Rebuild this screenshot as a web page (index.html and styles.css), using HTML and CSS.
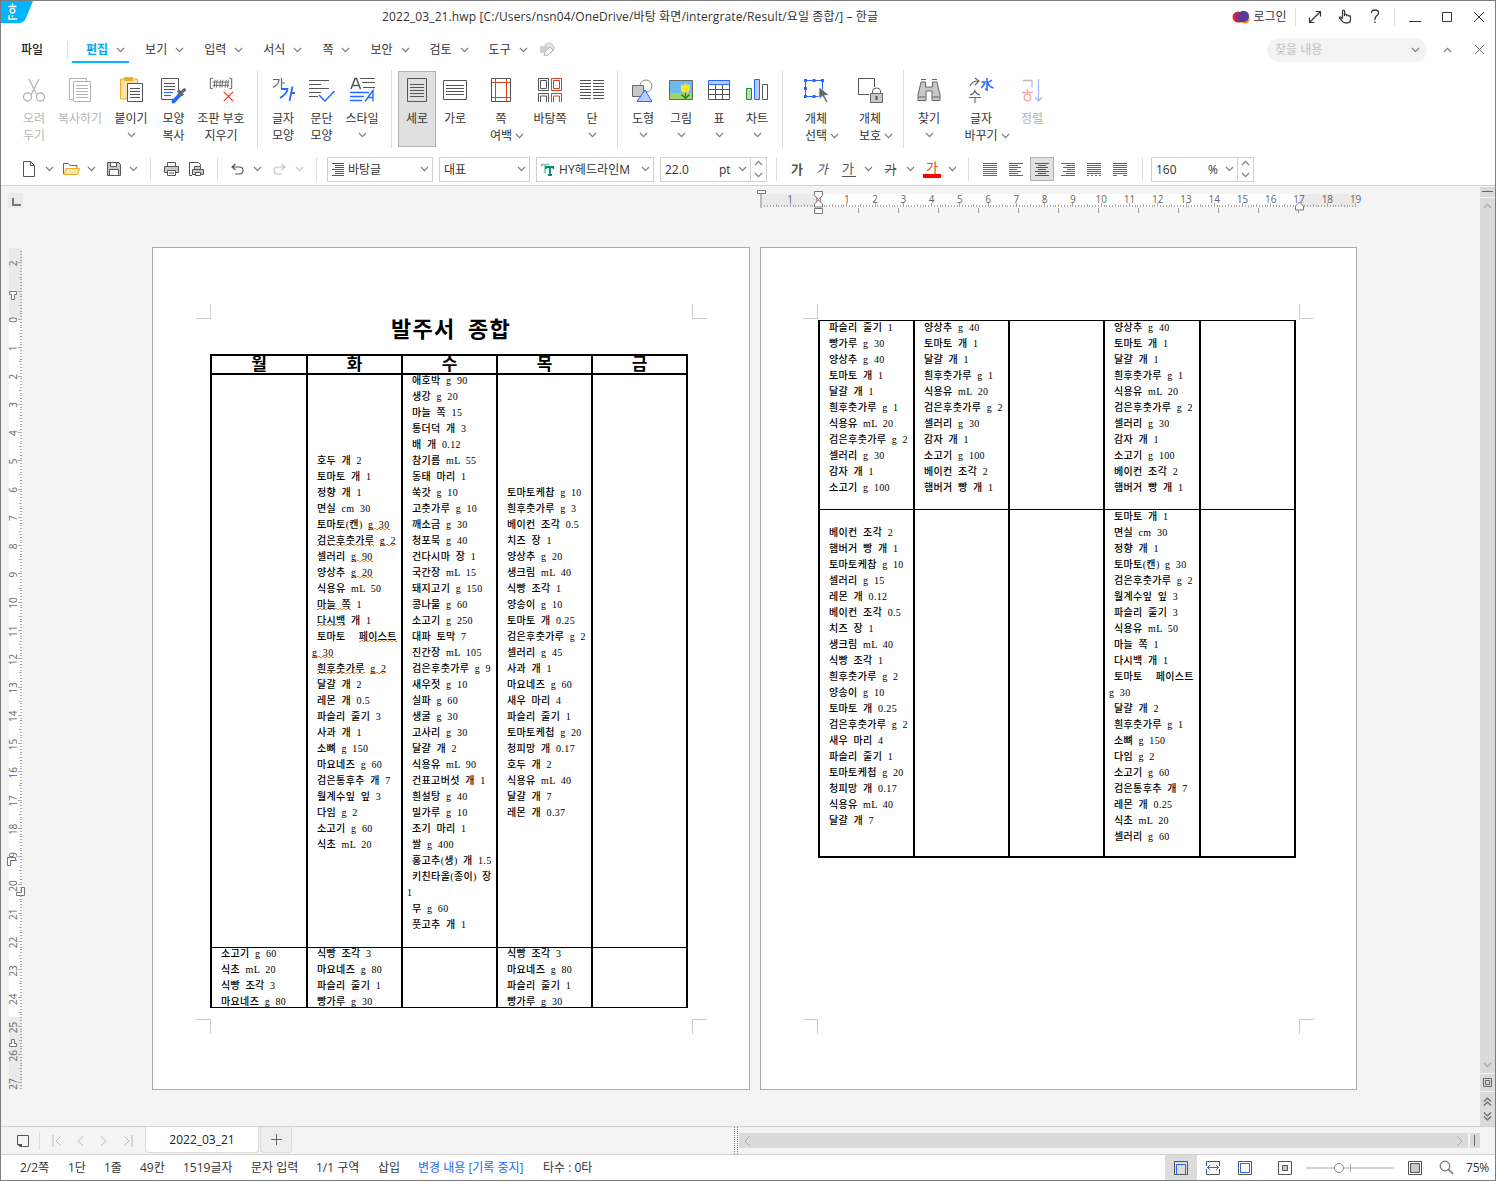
FILE: index.html
```html
<!DOCTYPE html>
<html lang="ko">
<head>
<meta charset="utf-8">
<title>2022_03_21.hwp - 한글</title>
<link rel="stylesheet" href="styles.css">
</head>
<body>
<svg width="0" height="0" class="defs" aria-hidden="true">
  <symbol id="chev" viewBox="0 0 9 6"><path d="M1 1l3.5 3.7L8 1" fill="none" stroke="#808080" stroke-width="1.2"/></symbol>
</svg>
<div class="app">
  <header class="titlebar">
    <svg class="logo" width="33" height="23" viewBox="0 0 33 23"><path d="M0 0h32l-7 17q-2 5-7 5H0z" fill="#00b4ff"/><g stroke="#fff" stroke-width="1.400" fill="none"><path d="M11.500 2.500v2M7.500 5.500h8"/><circle cx="11.500" cy="9.700" r="2.300"/><path d="M8 14v4h8M11.500 14v2"/></g></svg>
    <h1 class="caption">2022_03_21.hwp [C:/Users/nsn04/OneDrive/바탕 화면/intergrate/Result/요일 종합/] – 한글</h1>
    <div class="winbtns">
      <svg width="18" height="16" viewBox="0 0 18 16"><circle cx="13" cy="10" r="4.500" fill="#f89020"/><circle cx="6" cy="8" r="5.500" fill="#e0243c"/><circle cx="8.500" cy="8.500" r="5" fill="#9c2860"/><circle cx="11.500" cy="7.300" r="5.600" fill="#5a3c98"/></svg>
      <span>로그인</span>
      <i class="vline"></i>
      <svg width="14" height="14" viewBox="0 0 14 14"><path d="M2 12L12 2M7.500 1.500h5v5M1.500 7.500v5h5" fill="none" stroke="#333" stroke-width="1.200"/></svg>
      <svg width="14" height="15" viewBox="0 0 14 15"><path d="M4.500 9V2.500q0-1.500 1-1.500t1 1.500V7 5.500q2-.8 2 .8 2-.8 2 .7 2-.6 2 .8v3q0 3-3 3H7q-2 0-3-2L1.500 9q0-1.600 1.500-.8L4.500 10" fill="none" stroke="#333" stroke-width="1.200"/></svg>
      <svg width="10" height="15" viewBox="0 0 10 15"><path d="M1.500 4q0-3 3.500-3t3.500 3q0 1.700-1.700 2.800T5 10v1M5 12.500V14" fill="none" stroke="#333" stroke-width="1.300"/></svg>
      <i class="vline"></i>
      <svg width="12" height="12" viewBox="0 0 12 12"><path d="M0 10.500h12" stroke="#333"/></svg>
      <svg width="12" height="12" viewBox="0 0 12 12"><path d="M1.500 1.500h9v9h-9z" fill="none" stroke="#333"/></svg>
      <svg width="12" height="12" viewBox="0 0 12 12"><path d="M1 1l10 10M11 1L1 11" stroke="#333"/></svg>
    </div>
  </header>

  <nav class="menubar">
    <span class="file">파일</span><i class="vline"></i>
    <span class="menu active">편집<svg class="chev"><use href="#chev"/></svg></span>
    <span class="menu">보기<svg class="chev"><use href="#chev"/></svg></span>
    <span class="menu">입력<svg class="chev"><use href="#chev"/></svg></span>
    <span class="menu">서식<svg class="chev"><use href="#chev"/></svg></span>
    <span class="menu">쪽<svg class="chev"><use href="#chev"/></svg></span>
    <span class="menu">보안<svg class="chev"><use href="#chev"/></svg></span>
    <span class="menu">검토<svg class="chev"><use href="#chev"/></svg></span>
    <span class="menu">도구<svg class="chev"><use href="#chev"/></svg></span>
    <svg class="draw" width="17" height="15" viewBox="0 0 17 15"><circle cx="10" cy="6" r="5" fill="#e4e4e4" stroke="#c4c4c4"/><path d="M1 4h8v7H1z" fill="#d0d0d0"/><path d="M5 13.500l1-3.500 5-5 3 3-5 5z" fill="#fff" stroke="#b4b4b4"/></svg>
    <div class="search"><span>찾을 내용</span><svg class="chev"><use href="#chev"/></svg></div>
    <svg class="chev up"><use href="#chev"/></svg>
    <svg class="close" width="11" height="11" viewBox="0 0 11 11"><path d="M1 1l9 9M10 1l-9 9" stroke="#777"/></svg>
  </nav>

  <section class="ribbon">
    <div class="cmd off"><svg width="24" height="26" viewBox="0 0 24 26"><g fill="none" stroke="#b4b4b4" stroke-width="1.300"><path d="M7 2l8 16M17 2L9 18"/><circle cx="5.500" cy="20" r="4"/><circle cx="18.500" cy="20" r="4"/></g></svg><b>오려</b><b>두기</b></div>
    <div class="cmd off"><svg width="24" height="26" viewBox="0 0 24 26"><path d="M5 22.500H1.500v-21h17V4M5.500 4.500h17v20h-17zM8 8.500h12M8 11.500h12M8 14.500h12M8 17.500h12M8 20.500h12" fill="none" stroke="#b4b4b4"/></svg><b>복사하기</b></div>
    <div class="cmd"><svg width="24" height="26" viewBox="0 0 24 26"><path d="M1.500 2h17v20h-17z" fill="#fae3b0" stroke="#eeb020"/><path d="M5 0h9v4H5z" fill="#eeb020"/><path d="M8.500 6.500h15v18h-15z" fill="#fff" stroke="#555"/><path d="M11 11.500h10M11 14.500h10M11 17.500h10M11 20.500h10" stroke="#555"/></svg><b>붙이기</b><svg class="chev"><use href="#chev"/></svg></div>
    <div class="cmd"><svg width="27" height="26" viewBox="0 0 27 26"><path d="M13 22.500H1.500v-21h17V14M4 6.500h11M4 9.500h11M4 12.500h11" fill="none" stroke="#555"/><path d="M4 15.500h9M4 18.500h7" stroke="#2468ff"/><path d="M13.500 24.500l7-7.500" stroke="#2468ff" stroke-width="4" stroke-linecap="round"/><path d="M18 13.500l5 5M20.500 16l5-4" stroke="#666" stroke-width="3"/></svg><b>모양</b><b>복사</b></div>
    <div class="cmd"><svg width="28" height="28" viewBox="0 0 28 28"><path d="M5 1.500H2.500v11H5M23 1.500h2.500v11H23" fill="none" stroke="#555"/><path d="M5 5.500h17.500M5 9h17.500M7.500 3l-1 8.500M10 3L9 11.500M13.500 3l-1 8.500M16 3l-1 8.500M19.500 3l-1 8.500M22 3l-1 8.500" stroke="#666"/><path d="M17 16l10 10M27 16L17 26" stroke="#e04020" stroke-width="1.400"/></svg><b>조판 부호</b><b>지우기</b></div>
    <i class="vline"></i>
    <div class="cmd"><svg width="24" height="26" viewBox="0 0 24 26"><g fill="none"><path d="M2 2.500h6q0 5-6 8M10.500 1v11M10.500 6H14" stroke="#666" stroke-width="1.200"/><path d="M10 12h6.500q-.5 5-7.500 9M21.500 9.500L18.500 24M20 16h4" stroke="#2468ff" stroke-width="1.800"/></g></svg><b>글자</b><b>모양</b></div>
    <div class="cmd"><svg width="26" height="26" viewBox="0 0 26 26"><path d="M0 3.500h20M0 7.500h12M0 11.500h20M0 15.500h12M0 19.500h9" stroke="#555"/><path d="M10 18l6 6 9.500-10" fill="none" stroke="#2468ff" stroke-width="1.500"/></svg><b>문단</b><b>모양</b></div>
    <div class="cmd"><svg width="25" height="26" viewBox="0 0 25 26"><path d="M1 12L5 1.500h1.500l4 10.500M2.500 8.500H9" fill="none" stroke="#555" stroke-width="1.500"/><path d="M10 1.500h15M12 5.500h13M13 10.500h12" stroke="#555"/><path d="M0 15.500h19M0 19.500h14M0 23.500h12M15 24.500l8-11v11M18 20.500h5" fill="none" stroke="#2468ff" stroke-width="1.400"/></svg><b>스타일</b><svg class="chev"><use href="#chev"/></svg></div>
    <i class="vline"></i>
    <div class="cmd sel"><svg width="20" height="26" viewBox="0 0 20 26"><path d="M.5 1.500h19v23H.5zM3 7.500h14M3 10.500h14M3 13.500h14M3 16.500h14M3 19.500h14" fill="none" stroke="#555"/></svg><b>세로</b></div>
    <div class="cmd"><svg width="24" height="26" viewBox="0 0 24 26"><path d="M.5 3.500h23v19H.5zM3 8.500h18M3 11.500h18M3 14.500h18M3 17.500h18" fill="none" stroke="#555"/></svg><b>가로</b></div>
    <div class="cmd"><svg width="20" height="26" viewBox="0 0 20 26"><path d="M.5 1.500h19v23H.5z" fill="none" stroke="#555"/><path d="M4.500 2v22M15.500 2v22M1 5.500h18M1 20.500h18" stroke="#e04020"/></svg><b>쪽</b><b class="drop">여백<svg class="chev"><use href="#chev"/></svg></b></div>
    <div class="cmd"><svg width="24" height="26" viewBox="0 0 24 26"><g fill="none" stroke="#555"><path d="M.5 1.500h10v12H.5zM2.500 3.500h6v8h-6zM.5 25v-8.500h10V25M2.500 25v-6h6v6"/><path d="M13.500 1.500h10v12h-10zM15.500 3.500h6v8h-6zM13.500 25v-8.500h10V25M15.500 25v-6h6v6" stroke="#e04020"/></g></svg><b>바탕쪽</b></div>
    <div class="cmd"><svg width="24" height="26" viewBox="0 0 24 26"><path d="M0 3.500h11M0 6.500h11M0 9.500h11M0 12.500h11M0 15.500h11M0 18.500h11M0 21.500h11M13 3.500h11M13 6.500h11M13 9.500h11M13 12.500h11M13 15.500h11M13 18.500h11M13 21.500h11" stroke="#555"/></svg><b>단</b><svg class="chev"><use href="#chev"/></svg></div>
    <i class="vline"></i>
    <div class="cmd"><svg width="22" height="26" viewBox="0 0 22 26"><circle cx="14" cy="9" r="6" fill="#fff" stroke="#888"/><path d="M.5 8.500h11v11H.5z" fill="#c8c8c8" stroke="#666"/><path d="M5 24.500L13 13l7 11.500z" fill="#b8ccff" stroke="#2468ff"/></svg><b>도형</b><svg class="chev"><use href="#chev"/></svg></div>
    <div class="cmd"><svg width="24" height="26" viewBox="0 0 24 26"><path d="M.5 3.500h23v19H.5z" fill="#6cbcf0"/><path d="M1 16h22v6H1z" fill="#a0d468"/><path d="M.5 3.500h23v19H.5z" fill="none" stroke="#666"/><path d="M12 7l2 1.500L16.500 6 19 8.500 21 7v6q-1 3-4.500 3T12 13z" fill="#ffe030"/><path d="M16.500 15.500V22M12.500 17.500l4 4 4-4" fill="none" stroke="#1c7c1c" stroke-width="1.200"/></svg><b>그림</b><svg class="chev"><use href="#chev"/></svg></div>
    <div class="cmd"><svg width="22" height="26" viewBox="0 0 22 26"><path d="M.5 7.500h21v15H.5zM1 12.500h20M1 17.500h20M7.500 8v14M14.500 8v14" fill="none" stroke="#555"/><path d="M.5 3.500h21v4H.5z" fill="#b8ccff" stroke="#2468ff"/></svg><b>표</b><svg class="chev"><use href="#chev"/></svg></div>
    <div class="cmd"><svg width="23" height="26" viewBox="0 0 23 26"><path d="M.5 11.500h5v11h-5z" fill="#b4e0b4" stroke="#209020"/><path d="M8.500 2.500h5v20h-5z" fill="#b8ccff" stroke="#2468ff"/><path d="M16.500 7.500h5v15h-5z" fill="#fff" stroke="#555"/></svg><b>차트</b><svg class="chev"><use href="#chev"/></svg></div>
    <i class="vline"></i>
    <div class="cmd"><svg width="26" height="26" viewBox="0 0 26 26"><path d="M2.500 3.500h17v16h-17z" fill="none" stroke="#2468ff"/><path d="M1 2h3v3H1zM9.500 2h3v3h-3zM18 2h3v3h-3zM1 10h3v3H1zM1 18h3v3H1zM9.500 18h3v3h-3z" fill="#2468ff"/><path d="M16 10v0l10 8-4.500.5L25 25l-2 .5-3.500-6.500-3.500 3z" fill="#666" stroke="#fff" stroke-width=".6"/></svg><b>개체</b><b class="drop">선택<svg class="chev"><use href="#chev"/></svg></b></div>
    <div class="cmd"><svg width="26" height="26" viewBox="0 0 26 26"><path d="M12 17.500H1.500v-16h16V10" fill="none" stroke="#555"/><path d="M15.500 17v-3q0-3 4-3t4 3v3" fill="none" stroke="#666"/><path d="M13.500 16.500h12v9h-12z" fill="#c8c8c8" stroke="#666"/><path d="M19.500 19v4" stroke="#555" stroke-width="2"/></svg><b>개체</b><b class="drop">보호<svg class="chev"><use href="#chev"/></svg></b></div>
    <i class="vline"></i>
    <div class="cmd"><svg width="24" height="26" viewBox="0 0 24 26"><path d="M4 5L1 18v5.500h8V14h6v9.500h8V18L20 5h-4.500v5h-7V5zM4 2.500h5M15 2.500h5M1.500 20h7M15.500 20h7" fill="#c8c8c8" stroke="#666"/></svg><b>찾기</b><svg class="chev"><use href="#chev"/></svg></div>
    <div class="cmd"><svg width="26" height="26" viewBox="0 0 26 26"><path d="M2 9q2-5 8-5M7 1l4 3-4 4M7 13q-1 4-5 5M7 14q1 3 5 4M1 20.500h12M7 20.500V26" fill="none" stroke="#666" stroke-width="1.100"/><path d="M19 1v12l-2-1M13.500 5H17q-1 4-4 6M24 3l-4.500 3q2 4 6 5" fill="none" stroke="#2468ff" stroke-width="1.500"/></svg><b>글자</b><b class="drop">바꾸기<svg class="chev"><use href="#chev"/></svg></b></div>
    <div class="cmd off"><svg width="22" height="26" viewBox="0 0 22 26"><g fill="none"><path d="M2 3.500h9v7" stroke="#bbb" stroke-width="1.300"/><path d="M6.500 12v3M1 15.500h11" stroke="#f4a4a0" stroke-width="1.300"/><circle cx="6.500" cy="20.500" r="3.300" stroke="#f4a4a0" stroke-width="1.300"/><path d="M17.500 2v22M14 20l3.500 4 3.500-4" stroke="#9cbcff" stroke-width="1.200"/></g></svg><b>정렬</b></div>
  </section>

  <section class="toolbar">
    <svg width="14" height="16" viewBox="0 0 14 16"><path d="M1.500.5h7l4 4v11h-11zM8.500.5v4h4" fill="none" stroke="#555"/></svg>
    <svg class="chev"><use href="#chev"/></svg>
    <svg width="17" height="14" viewBox="0 0 17 14"><path d="M.5 12V1.500h5l1.500 2h7V6" fill="none" stroke="#666"/><path d="M1 12.500L3 6.500h13.500l-1.800 6z" fill="#fae3b0" stroke="#eeb020"/></svg>
    <svg class="chev"><use href="#chev"/></svg>
    <svg width="14" height="14" viewBox="0 0 14 14"><path d="M.5.500h11l2 2v11H.5z" fill="#c8c8c8" stroke="#555"/><path d="M3.500.5h6v4h-6zM2.500 7.500h9v6h-9z" fill="#fff" stroke="#555"/></svg>
    <svg class="chev"><use href="#chev"/></svg>
    <i class="vline"></i>
    <svg width="15" height="14" viewBox="0 0 15 14"><path d="M3.500.5h8v4h-8z" fill="#fff" stroke="#555"/><path d="M.5 4.500h14v6H.5z" fill="#c8c8c8" stroke="#555"/><path d="M3.500 8.500h8v5h-8zM5 11h5" fill="#fff" stroke="#555"/></svg>
    <svg width="16" height="16" viewBox="0 0 16 16"><path d="M4 14.500H1.500V1.500h9l2 2V5" fill="none" stroke="#555"/><path d="M6.500 5.500h6v3h-6zM4.500 8.500h11v5h-11z" fill="#c8c8c8" stroke="#555"/><path d="M7.500 11.500h5v3h-5z" fill="#fff" stroke="#555"/></svg>
    <i class="vline"></i>
    <svg width="13" height="12" viewBox="0 0 13 12"><path d="M4.500 1L1 4l3.500 3M1 4h7.500q3.500 0 3.500 3.500T8.500 11H4" fill="none" stroke="#555" stroke-width="1.200"/></svg>
    <svg class="chev"><use href="#chev"/></svg>
    <svg width="13" height="12" viewBox="0 0 13 12"><path d="M8.500 1L12 4 8.500 7M12 4H4.500Q1 4 1 7.500T4.500 11H9" fill="none" stroke="#c4c4c4" stroke-width="1.200"/></svg>
    <svg class="chev faint"><use href="#chev"/></svg>
    <i class="vline end1"></i>
    <div class="field"><svg width="13" height="14" viewBox="0 0 13 14"><path d="M0 1.500h12M3 3.500h9M3 5.500h9M0 7.500h12M3 9.500h9M3 11.500h9M0 13.500h12" stroke="#555"/></svg><span>바탕글</span><svg class="chev"><use href="#chev"/></svg></div>
    <div class="field"><span>대표</span><svg class="chev"><use href="#chev"/></svg></div>
    <div class="field face"><svg width="13" height="13" viewBox="0 0 13 13"><path d="M.5 4V1.500h8M4 1.500v8M2.500 9.500H5" fill="none" stroke="#7cc8b0" stroke-width="1.500"/><path d="M5 6V4h7.500v2M9 4v8M7 12h4" fill="none" stroke="#008c74" stroke-width="1.800"/></svg><span>HY헤드라인M</span><svg class="chev"><use href="#chev"/></svg></div>
    <div class="field"><span class="num">22.0</span><span>pt</span><svg class="chev"><use href="#chev"/></svg><div class="spin"><svg class="chev up"><use href="#chev"/></svg><svg class="chev"><use href="#chev"/></svg></div></div>
    <i class="vline"></i>
    <b class="fmt">가</b>
    <em class="fmt">가</em>
    <u class="fmt">가</u>
    <svg class="chev"><use href="#chev"/></svg>
    <s class="fmt">가</s>
    <svg class="chev"><use href="#chev"/></svg>
    <span class="fmt color">가</span>
    <svg class="chev"><use href="#chev"/></svg>
    <i class="vline end2"></i>
    <span class="al"><svg width="14" height="14" viewBox="0 0 14 14"><path d="M0 1.500h14M0 3.500h14M0 5.500h14M0 7.500h14M0 9.500h14M0 11.500h14M0 13.500h14" stroke="#666"/></svg></span>
    <span class="al"><svg width="14" height="14" viewBox="0 0 14 14"><path d="M0 1.500h14M0 3.500h9M0 5.500h12M0 7.500h8M0 9.500h12M0 11.500h9M0 13.500h14" stroke="#666"/></svg></span>
    <span class="al on"><svg width="14" height="14" viewBox="0 0 14 14"><path d="M0 1.500h14M3 3.500h8M1 5.500h12M3 7.500h8M0 9.500h14M3 11.500h8M0 13.500h14" stroke="#555"/></svg></span>
    <span class="al"><svg width="14" height="14" viewBox="0 0 14 14"><path d="M0 1.500h14M5 3.500h9M2 5.500h12M6 7.500h8M2 9.500h12M5 11.500h9M0 13.500h14" stroke="#666"/></svg></span>
    <span class="al"><svg width="14" height="14" viewBox="0 0 14 14"><path d="M0 1.500h14M0 3.500h14M0 5.500h14M0 7.500h14M0 9.500h14M0 11.500h14M0 13.500h2M4 13.500h2M8 13.500h2M12 13.500h2" stroke="#666"/></svg></span>
    <span class="al"><svg width="14" height="14" viewBox="0 0 14 14"><path d="M0 1.500h14M0 3.500h14M0 5.500h14M0 7.500h14M0 9.500h14M0 11.500h14M0 13.500h4M10 13.500h4" stroke="#666"/></svg></span>
    <i class="vline"></i>
    <div class="field"><span class="num">160</span><span>%</span><svg class="chev"><use href="#chev"/></svg><div class="spin"><svg class="chev up"><use href="#chev"/></svg><svg class="chev"><use href="#chev"/></svg></div></div>
  </section>

  <main class="work">
    <div class="canvas">
      <div class="tabtype"></div>
      <svg id="hruler" class="hruler" width="620" height="28"></svg>
      <svg id="vruler" class="vruler" width="20" height="842"></svg>
      <article class="page first">
        <i class="crop tl"></i><i class="crop tr"></i><i class="crop bl"></i><i class="crop br"></i>
        <h2>발주서 종합</h2>
        <div class="sheet">
          <div class="c head">월</div><div class="c head">화</div><div class="c head">수</div><div class="c head">목</div><div class="c head">금</div>
<div class="c"></div>
<div class="c"><p>호두 개 2
토마토 개 1
정향 개 1
면실 cm 30
토마토(캔) <q>g 30</q>
<q>검은후춧가루</q> <q>g 2</q>
셀러리 <q>g 90</q>
양상추 <q>g 20</q>
식용유 mL 50
<q>마늘 쪽</q> 1
<q>다시백</q> 개 1
<span class="spread">토마토 </span><q>페이스트</q>
<span class="wrap"><q>g 30</q></span>
<q>흰후춧가루</q> <q>g 2</q>
달걀 개 2
레몬 개 0.5
파슬리 줄기 3
사과 개 1
소뼈 g 150
마요네즈 g 60
검은통후추 개 7
월계수잎 잎 3
다임 g 2
소고기 g 60
식초 mL 20</p></div>
<div class="c"><p>애호박 g 90
생강 g 20
마늘 쪽 15
통더덕 개 3
배 개 0.12
참기름 mL 55
동태 마리 1
쑥갓 g 10
고춧가루 g 10
깨소금 g 30
청포묵 g 40
건다시마 장 1
국간장 mL 15
돼지고기 g 150
콩나물 g 60
소고기 g 250
대파 토막 7
진간장 mL 105
검은후춧가루 g 9
새우젓 g 10
실파 g 60
생굴 g 30
고사리 g 30
달걀 개 2
식용유 mL 90
건표고버섯 개 1
흰설탕 g 40
밀가루 g 10
조기 마리 1
쌀 g 400
홍고추(생) 개 1.5
키친타올(종이) 장
<span class="wrap">1</span>
무 g 60
풋고추 개 1</p></div>
<div class="c"><p>토마토케찹 g 10
흰후춧가루 g 3
베이컨 조각 0.5
치즈 장 1
양상추 g 20
생크림 mL 40
식빵 조각 1
양송이 g 10
토마토 개 0.25
검은후춧가루 g 2
셀러리 g 45
사과 개 1
마요네즈 g 60
새우 마리 4
파슬리 줄기 1
토마토케첩 g 20
청피망 개 0.17
호두 개 2
식용유 mL 40
달걀 개 7
레몬 개 0.37</p></div>
<div class="c"></div>
<div class="c top"><p>소고기 g 60
식초 mL 20
식빵 조각 3
마요네즈 g 80</p></div>
<div class="c top"><p>식빵 조각 3
마요네즈 g 80
파슬리 줄기 1
빵가루 g 30</p></div>
<div class="c top"></div>
<div class="c top"><p>식빵 조각 3
마요네즈 g 80
파슬리 줄기 1
빵가루 g 30</p></div>
<div class="c top"></div>
        </div>
      </article>
      <article class="page second">
        <i class="crop tl"></i><i class="crop tr"></i><i class="crop bl"></i><i class="crop br"></i>
        <div class="sheet">
<div class="c top"><p>파슬리 줄기 1
빵가루 g 30
양상추 g 40
토마토 개 1
달걀 개 1
흰후춧가루 g 1
식용유 mL 20
검은후춧가루 g 2
셀러리 g 30
감자 개 1
소고기 g 100</p></div>
<div class="c top"><p>양상추 g 40
토마토 개 1
달걀 개 1
흰후춧가루 g 1
식용유 mL 20
검은후춧가루 g 2
셀러리 g 30
감자 개 1
소고기 g 100
베이컨 조각 2
햄버거 빵 개 1</p></div>
<div class="c top"></div>
<div class="c top"><p>양상추 g 40
토마토 개 1
달걀 개 1
흰후춧가루 g 1
식용유 mL 20
검은후춧가루 g 2
셀러리 g 30
감자 개 1
소고기 g 100
베이컨 조각 2
햄버거 빵 개 1</p></div>
<div class="c top"></div>
<div class="c"><p>베이컨 조각 2
햄버거 빵 개 1
토마토케찹 g 10
셀러리 g 15
레몬 개 0.12
베이컨 조각 0.5
치즈 장 1
생크림 mL 40
식빵 조각 1
흰후춧가루 g 2
양송이 g 10
토마토 개 0.25
검은후춧가루 g 2
새우 마리 4
파슬리 줄기 1
토마토케첩 g 20
청피망 개 0.17
식용유 mL 40
달걀 개 7</p></div>
<div class="c"></div>
<div class="c"></div>
<div class="c"><p>토마토 개 1
면실 cm 30
정향 개 1
토마토(캔) g 30
검은후춧가루 g 2
월계수잎 잎 3
파슬리 줄기 3
식용유 mL 50
마늘 쪽 1
다시백 개 1
<span class="spread">토마토 </span>페이스트
<span class="wrap">g 30</span>
달걀 개 2
흰후춧가루 g 1
소뼈 g 150
다임 g 2
소고기 g 60
검은통후추 개 7
레몬 개 0.25
식초 mL 20
셀러리 g 60</p></div>
<div class="c"></div>
        </div>
      </article>
    </div>
    <aside class="vscroll">
      <div class="split"></div>
      <div class="track"><svg class="chev up"><use href="#chev"/></svg><svg class="chev"><use href="#chev"/></svg></div>
      <div class="obj"><svg width="9" height="9" viewBox="0 0 9 9"><path d="M.5.500h8v8h-8zM2.500 2.500h4v4h-4z" fill="none" stroke="#666"/></svg></div>
      <div class="jump"><svg width="9" height="9" viewBox="0 0 9 9"><path d="M1 4.500L4.500 1 8 4.500M1 8.500L4.500 5 8 8.500" fill="none" stroke="#666" stroke-width="1.200"/></svg><svg width="9" height="9" viewBox="0 0 9 9"><path d="M1 .5L4.500 4 8 .5M1 4.500L4.500 8 8 4.500" fill="none" stroke="#666" stroke-width="1.200"/></svg></div>
    </aside>
  </main>

  <section class="tabs">
    <svg width="12" height="14" viewBox="0 0 12 14"><path d="M.5 1.500h11v11h-6l-5-2z" fill="none" stroke="#555"/><path d="M0 10h5v3H3z" fill="#555"/></svg>
    <i class="vline"></i>
    <svg width="9" height="12" viewBox="0 0 9 12"><path d="M1 0v12M8.500 1.500L4 6l4.500 4.500" fill="none" stroke="#bbb"/></svg>
    <svg width="9" height="12" viewBox="0 0 9 12"><path d="M7 1.500L2 6l5 4.500" fill="none" stroke="#bbb"/></svg>
    <svg width="9" height="12" viewBox="0 0 9 12"><path d="M2 1.500L7 6l-5 4.500" fill="none" stroke="#bbb"/></svg>
    <svg width="9" height="12" viewBox="0 0 9 12"><path d="M8 0v12M.5 1.500L5 6 .5 10.500" fill="none" stroke="#bbb"/></svg>
    <div class="tab">2022_03_21</div>
    <div class="add"><svg width="11" height="11" viewBox="0 0 11 11"><path d="M5.500 0v11M0 5.500h11" stroke="#666"/></svg></div>
    <div class="grip"></div>
    <div class="hscroll"><svg width="6" height="10" viewBox="0 0 6 10"><path d="M5.500.5L1 5l4.500 4.500" fill="none" stroke="#aaa"/></svg><svg width="6" height="10" viewBox="0 0 6 10"><path d="M.5.500L5 5 .5 9.500" fill="none" stroke="#aaa"/></svg></div>
    <div class="hsplit"></div>
  </section>

  <footer class="status">
    <span>2/2쪽</span><span>1단</span><span>1줄</span><span>49칸</span><span>1519글자</span><span>문자 입력</span><span>1/1 구역</span><span>삽입</span><span class="blue">변경 내용 [기록 중지]</span><span>타수 : 0타</span>
    <div class="views">
      <span class="v on"><svg width="14" height="14" viewBox="0 0 14 14"><path d="M.5.500h13v13H.5z" fill="none" stroke="#555"/><path d="M2.500 14V3.500h9V14" fill="none" stroke="#2468ff"/></svg></span>
      <span class="v"><svg width="14" height="14" viewBox="0 0 14 14"><path d="M.5.500h13v13H.5z" fill="none" stroke="#555"/><path d="M0 5h14v3H0z" fill="#fff"/><path d="M1 6.500h12M4 4L1.500 6.500 4 9M10 4l2.500 2.500L10 9" fill="none" stroke="#2468ff"/></svg></span>
      <span class="v"><svg width="14" height="14" viewBox="0 0 14 14"><path d="M.5.500h13v13H.5z" fill="none" stroke="#555"/><path d="M2.500 2.500h9v9h-9z" fill="none" stroke="#2468ff"/></svg></span>
      <span class="v z"><svg width="14" height="14" viewBox="0 0 14 14"><path d="M.5.500h13v13H.5z" fill="none" stroke="#555"/><path d="M4.500 4.500h5v5h-5z" fill="#c8c8c8" stroke="#555"/></svg></span>
      <svg class="slider" width="88" height="14" viewBox="0 0 88 14"><path d="M0 7h88" stroke="#c4c4c4" stroke-width="1.500"/><path d="M44.500 3v8" stroke="#aaa"/><circle cx="33" cy="7" r="4.500" fill="#fff" stroke="#888"/></svg>
      <svg class="fit" width="14" height="14" viewBox="0 0 14 14"><path d="M.5.500h13v13H.5z" fill="none" stroke="#555"/><path d="M2.500 2.500h9v9h-9z" fill="#c8c8c8" stroke="#555"/></svg>
      <svg class="mag" width="15" height="15" viewBox="0 0 15 15"><circle cx="6" cy="6" r="4.800" fill="none" stroke="#777" stroke-width="1.200"/><path d="M9.500 9.500l4.500 4.500" stroke="#777" stroke-width="1.700"/></svg>
      <span class="pct">75%</span>
    </div>
  </footer>
</div>
<script src="rulers.js"></script>
</body>
</html>
```
FILE: styles.css
```css
* { box-sizing: border-box; }
body { margin: 0; font: 12px/17px "Open Sans", "Noto Sans CJK KR", sans-serif; color: #333; }
.defs { position: absolute; }
svg { display: block; flex: none; }
.app { width: 1496px; height: 1181px; border: 1px solid #7c7c7c; background: #fff; display: flex; flex-direction: column; overflow: hidden; }
.chev { width: 9px; height: 6px; }
.chev.up { transform: scaleY(-1); }
.chev.faint { opacity: .45; }
.vline { width: 1px; background: #dcdcdc; flex: none; }

/* title bar */
.titlebar { height: 32px; display: grid; grid-template-columns: 381px 1fr auto; }
.caption { margin: 0; font-size: 12px; font-weight: 400; line-height: 31px; letter-spacing: .12px; white-space: nowrap; }
.winbtns { display: grid; grid-template-columns: 18px 40px 11px 28px 32px 28px 10px 32px 32px 32px; justify-items: center; align-items: center; height: 31px; white-space: nowrap; }
.winbtns .vline { height: 18px; }

/* menu */
.menubar { height: 33px; display: flex; align-items: center; padding-left: 20px; }
.file { width: 46px; font-weight: 500; color: #222; }
.menubar .vline { height: 18px; }
.menu { display: flex; align-items: center; gap: 8px; height: 27px; padding: 0 4px 0 14px; margin-left: 1.4px; }
.menu + .menu { margin-left: 2px; }
.menu.active { margin-left: 4px; color: #00a8f4; font-weight: 600; box-shadow: inset 0 -2px #00b4ff; }
.draw { margin-left: 7px; }
.search { margin-left: auto; width: 160px; height: 24px; border-radius: 12px; background: #f3f3f3; color: #c0c0c0; display: flex; align-items: center; justify-content: space-between; padding: 0 7px 0 8px; }
.menubar > .up { margin-left: 16px; }
.close { margin: 0 10px 0 22px; }

/* ribbon */
.ribbon { height: 87px; padding: 5px 0 0 13px; display: grid; grid-template-rows: 76px; grid-template-columns: 40px 52px 50px 35px 60px 12px 40px 37px 44px 14px 38px 38px 54px 44px 40px 10px 42px 34px 42px 34px 16px 52px 56px 10px 42px 62px 40px; }
.ribbon > .vline { justify-self: center; height: 78px; margin-top: -1px; }
.cmd { display: flex; flex-direction: column; align-items: center; padding-top: 6px; white-space: nowrap; }
.cmd > svg:first-child { margin-bottom: 7px; height: 26px; overflow: visible; }
.cmd b { font-weight: 400; line-height: 17px; }
.cmd > .chev { margin-top: 5px; }
.cmd.off { color: #b4b4b4; }
.cmd.sel { background: #e0e0e0; box-shadow: inset 0 0 0 1px #b0b0b0; }
.drop { display: flex; align-items: center; gap: 3px; margin-right: -12px; }

/* formatting bar */
.toolbar { height: 33px; border-bottom: 1px solid #d0d0d0; padding-left: 17px; display: grid; align-items: center; justify-items: center; grid-template-columns: 22px 18px 26px 14px 31px 8px 26px 16px 34px 8px 32px 8px 36px 4px 26px 112px 97px 124px 107px 19px 22px 30px 22px 16px 29px 10px 34px 6px 22px repeat(6, 26px) 18px 103px; }
.toolbar > .vline { height: 24px; }
.toolbar > .end1 { justify-self: end; margin-right: 10px; }
.toolbar > .end2 { justify-self: end; margin-right: 8px; }
.field { justify-self: start; width: 106px; height: 25px; border: 1px solid #d0d0d0; display: flex; align-items: center; padding: 0 3px 0 4px; white-space: nowrap; }
.field:nth-of-type(2) { width: 91px; }
.field:nth-of-type(3) { width: 118px; }
.field:nth-of-type(4) { width: 107px; padding-right: 0; }
.field:nth-of-type(5) { width: 103px; padding-right: 0; }
.field svg + span { margin-left: 3px; }
.field.face svg + span { margin-left: 5px; letter-spacing: .1px; }
.field > .chev { margin-left: auto; }
.field .num { width: 54px; }
.field:nth-of-type(5) .num { width: 52px; }
.field .spin { width: 16px; height: 100%; border-left: 1px solid #d0d0d0; margin-left: 3px; display: flex; flex-direction: column; align-items: center; justify-content: space-around; }
.fmt { color: #555; text-decoration-thickness: 1px; line-height: 16px; font-size: 13px; }
u.fmt { text-decoration: none; border-bottom: 1px solid #555; line-height: 15px; padding-right: 2px; }
em.fmt { font-style: normal; transform: skewX(-12deg); }
s.fmt { line-height: 15px; }
.fmt.color { color: #e04020; line-height: 13px; border: solid #f00; border-width: 0 0 4px; padding: 0 3px; }
.al { width: 24px; height: 24px; display: grid; place-items: center; }
.al.on { background: #e0e0e0; box-shadow: inset 0 0 0 1px #b0b0b0; }

/* document area */
.work { height: 940px; display: flex; background: #f4f4f4; }
.canvas { width: 1479px; position: relative; display: grid; grid-template: 61px 843px / 151px 598px 10px 597px; }
.tabtype { margin: 7px 0 0 7px; width: 15px; height: 15px; background: #eaeaea; padding: 5px 4px 4px; }
.tabtype::before { content: ""; display: block; width: 7px; height: 6px; border: solid #777; border-width: 0 0 2px 2px; }
.hruler { grid-area: 1 / 4; margin: 2px 0 0 -4px; }
.vruler { grid-area: 2 / 1; margin: 1px 0 0 5px; }
.hruler text, .vruler text { font: 10px "Open Sans", sans-serif; fill: #666; }
.page { grid-row: 2; position: relative; background: #fff; border: 1px solid #aaa; color: #000; }
.page.first { grid-column: 2; padding-left: 57px; }
.page.second { grid-column: 4; padding: 72px 0 0 57px; }
.crop { position: absolute; width: 15px; height: 15px; border: 0 solid #ccc; }
.crop.tl { left: 43px; top: 56px; border-width: 0 1px 1px 0; }
.crop.tr { left: 539px; top: 56px; border-width: 0 0 1px 1px; }
.crop.bl { left: 43px; top: 771px; border-width: 1px 1px 0 0; }
.crop.br { left: 539px; top: 771px; border-width: 1px 0 0 1px; }
.second .crop.tl, .second .crop.bl { left: 42px; }
.second .crop.tr, .second .crop.br { left: 538px; }
.page h2 { margin: 0; width: 482px; height: 106px; padding-top: 64px; text-align: center; font: 700 22px/30px "Noto Sans CJK KR", sans-serif; letter-spacing: 1.3px; word-spacing: 5px; }
.sheet { display: grid; width: 478px; border-right: 2px solid #000; }
.first .sheet { border-top: 2px solid #000; grid-template: 19px 573px 60px / 96px 95px 95px 95px 95px; }
.second .sheet { border-top: 1px solid #000; border-bottom: 1px solid #000; grid-template: 189px 347px / 95px 95px 95px 96px 95px; }
.c { border-left: 2px solid #000; border-bottom: 1px solid #000; display: flex; align-items: center; padding: 0 0 16px 9px; min-width: 0; min-height: 0; }
.second .c { padding-bottom: 14px; }
.c.top, .second .c.top { align-items: flex-start; padding: 0 0 0 9px; }
.c.top p { margin-top: -2px; }
.second .c p { position: relative; top: .6px; }
.c.head { border-bottom-width: 2px; padding: 0; justify-content: center; font: 700 17px/14px "Noto Sans CJK KR", sans-serif; padding-bottom: 3px; }
.c p { margin: 0; white-space: pre; font: 500 10px/16px "Liberation Serif", "Noto Sans CJK KR", serif; letter-spacing: .35px; word-spacing: 2.6px; }
.spread { word-spacing: 10.2px; }
.wrap { margin-left: -5px; }
.c q { quotes: none; background: linear-gradient(90deg, #f08030 2px, transparent 2px) 0 100% / 4px 1px repeat-x, linear-gradient(90deg, #f08030 2px, transparent 2px) 2px calc(100% - 1px) / 4px 1px repeat-x; }

.vscroll { width: 15px; display: flex; flex-direction: column; gap: 1px; padding-top: 1px; }
.vscroll > div { background: #dadada; display: flex; flex-direction: column; align-items: center; }
.split { height: 10px; }
.split::before { content: ""; width: 11px; height: 1px; margin-top: 4px; background: #666; }
.track { flex: 1; justify-content: space-between; padding: 5px 0; }
.track .chev { opacity: .55; }
.obj { height: 17px; justify-content: center; }
.jump { height: 34px; justify-content: space-evenly; }

/* document tabs */
.tabs { height: 29px; border-top: 1px solid #d0d0d0; border-bottom: 1px solid #d0d0d0; background: #f4f4f4; display: grid; align-items: center; justify-items: center; grid-template-columns: 44px 1px 21px 26px 21px 31px 114px 33px 456px 729px 10px; }
.tabs > .vline { height: 18px; margin-left: -12px; }
.tabs > svg:nth-of-type(5) { margin-right: 3px; }
.tab { align-self: start; justify-self: stretch; height: 26px; background: #fff; border: 1px solid #dcdcdc; border-top: 0; border-radius: 0 0 4px 4px; text-align: center; line-height: 25px; color: #222; }
.add { align-self: start; justify-self: end; width: 32px; height: 26px; background: #eee; border: 1px solid #dcdcdc; border-top: 0; border-radius: 0 0 4px 4px; display: grid; place-items: center; }
.grip { justify-self: end; margin-right: 10px; width: 4px; height: 27px; border: dotted #888; border-width: 0 1px; }
.hscroll { width: 729px; margin-left: -18px; height: 15px; background: #dadada; display: flex; align-items: center; justify-content: space-between; padding: 0 5px; }
.hsplit { width: 10px; height: 15px; margin-left: -15px; background: linear-gradient(#666, #666) 4px 2px / 1px 11px no-repeat #dadada; }

/* status */
.status { height: 25px; display: grid; align-items: center; padding-left: 19px; white-space: nowrap; grid-template-columns: 48px 36px 36px 43px 68px 65px 62px 40px 125px 1fr auto; }
.blue { color: #2468ff; }
.views { display: flex; align-items: center; height: 25px; }
.v { width: 32px; height: 25px; display: grid; place-items: center; }
.v.on { background: #dcdcdc; }
.v.z { margin-left: 8px; }
.slider { margin-left: 5px; }
.fit { margin-left: 14px; }
.mag { margin-left: 17px; }
.pct { margin: 0 5px 0 12px; width: 24px; letter-spacing: -.2px; }
```
FILE: rulers.js
```js
const NS = 'http://www.w3.org/2000/svg';
const CM = 28.27;

function add(svg, name, attrs, text) {
  const el = document.createElementNS(NS, name);
  for (const key in attrs) el.setAttribute(key, attrs[key]);
  if (text !== undefined) el.textContent = text;
  svg.appendChild(el);
}
function rect(svg, x, y, width, height, fill) {
  add(svg, 'rect', { x, y, width, height, fill });
}
function mark(svg, d) {
  add(svg, 'path', { d, fill: '#fff', stroke: '#777' });
}

// Horizontal ruler: zero at x = 62, left edge at x = 5
const h = document.getElementById('hruler');
rect(h, 5, 6, 57, 13, '#eaeaea');
rect(h, 62, 6, 481, 13, '#fff');
rect(h, 543, 6, 57, 13, '#eaeaea');
rect(h, 4, 5, 2, 15, '#bbb');
for (let i = -19; i <= 190; i++) {
  const x = Math.round(62 + i * CM / 10);
  const size = i % 10 === 0 ? 4 : i % 5 === 0 ? 3 : 2;
  rect(h, x, 19 - size, 1, size, '#aaa');
}
for (let i = -1; i < 20; i++) {
  add(h, 'text', { x: 62.5 + i * CM, y: 14.5, 'text-anchor': 'middle' }, Math.abs(i));
}
for (let x = 102; x < 545; x += 40) rect(h, x, 20, 1, 5, '#999');
mark(h, 'M1.500 2.500h8v3h-8z');
mark(h, 'M58.500 3.500h8v4l-4 4-4-4zM62.500 12l4 4v3h-8v-3zM58.500 20.500h8v5h-8z');
mark(h, 'M543.500 14l4 4v4h-8v-4z');

// Vertical ruler: zero at y = 71
const v = document.getElementById('vruler');
rect(v, 3, 0, 13, 71, '#eaeaea');
rect(v, 3, 71, 13, 698, '#fff');
rect(v, 3, 769, 13, 72, '#eaeaea');
for (let i = -24; i <= 272; i++) {
  const y = Math.round(71 + i * CM / 10);
  const size = i % 10 === 0 ? 4 : i % 5 === 0 ? 3 : 2;
  rect(v, 16 - size, y, size, 1, '#aaa');
}
for (let i = -2; i < 28; i++) {
  if (i === -1) continue;
  const y = 72 + i * 28.3;
  add(v, 'text', { x: 0, y: 0, transform: `translate(11 ${y}) rotate(-90)`, 'text-anchor': 'middle' }, Math.abs(i));
}
mark(v, 'M3.500 43.500h7v3h-2v5h-3v-5h-2z');
mark(v, 'M1.500 609.500h8v3h-5v5h-3z');
mark(v, 'M18.500 639.500v8h-8v-3h5v-5z');
mark(v, 'M5.500 791.500h3v4h2v3h-7v-3h2z');
```
